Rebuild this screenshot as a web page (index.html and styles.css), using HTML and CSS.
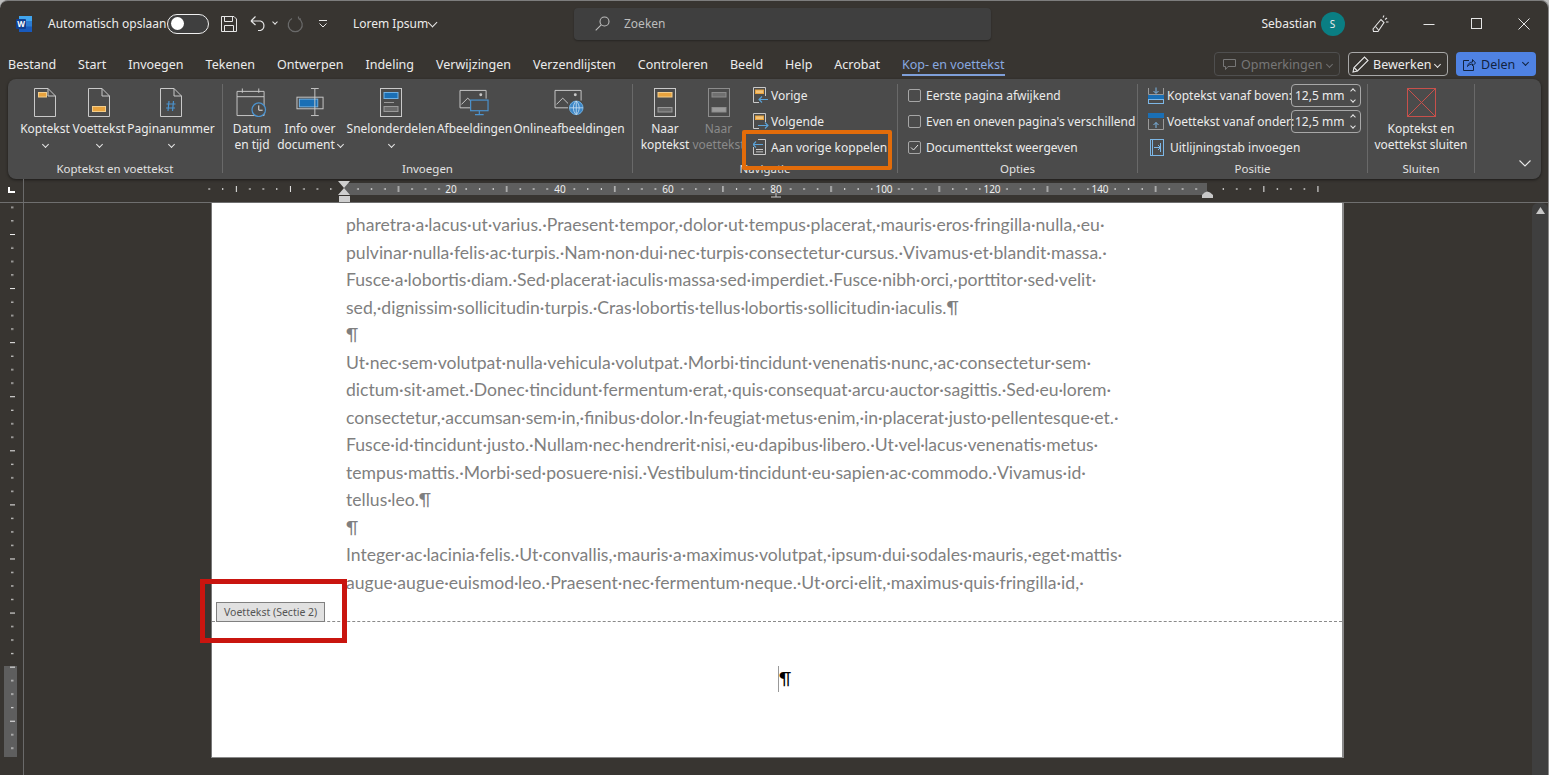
FILE: index.html
```html
<!DOCTYPE html>
<html lang="nl">
<head>
    <meta charset="UTF-8">
    <meta name="viewport" content="width=device-width, initial-scale=1.0">
    <title>Lorem Ipsum - Word</title>
    <link rel="stylesheet" href="styles.css">
</head>
<body>

<div class="window">

    <!-- Title bar -->
    <header class="titlebar">
        <div class="title-left">
            <svg class="logo" width="16" height="16" viewBox="0 0 16 16">
                <rect x="3" y="0" width="13" height="16" rx="1" fill="#2b7cd3"/>
                <rect x="3" y="0" width="13" height="5" fill="#41a5ee"/>
                <rect x="3" y="10.5" width="13" height="5.5" fill="#185abd"/>
                <rect x="0" y="3" width="10" height="10" rx="1" fill="#103f91"/>
                <text x="5" y="11" text-anchor="middle" font-size="8" font-weight="700" fill="#fff">W</text>
            </svg>
            <span class="autosave">Automatisch opslaan</span>
            <span class="toggle"><i class="toggle-knob"></i></span>
            <svg class="qa-save" width="16" height="16" viewBox="0 0 16 16" fill="none" stroke="#e6e6e6">
                <path d="M.5.5H13L15.5 3V15.5H.5Z"/>
                <path d="M3.5.5V5.5H11.5V.5M3.5 15.5V9.5H12.5V15.5"/>
            </svg>
            <svg class="qa-undo" width="17" height="17" viewBox="0 0 17 17" fill="none" stroke="#e6e6e6" stroke-width="1.2">
                <path d="M1 6H10.5A5 5 0 0 1 10.5 15.5H8M1 6L5.5 1.5M1 6L5.5 10"/>
            </svg>
            <i class="chev qa-chev"></i>
            <svg class="qa-redo" width="17" height="17" viewBox="0 0 17 17" fill="none" stroke="#6a6a6a" stroke-width="1.2">
                <path d="M11.5 2.5A7 7 0 1 1 5 2.5M11.5 2.5V.5M11.5 2.5L14 3"/>
            </svg>
            <svg class="qa-more" width="8" height="8" viewBox="0 0 8 8" fill="none" stroke="#e6e6e6">
                <path d="M0 .5H8M.5 3.5L4 7L7.5 3.5"/>
            </svg>
            <span class="doc-name">Lorem Ipsum</span>
            <i class="chev doc-chev"></i>
        </div>
        <div class="search">
            <svg width="15" height="15" viewBox="0 0 15 15" fill="none" stroke="#bdbdbd" stroke-width="1.1">
                <circle cx="9.5" cy="5.5" r="4.5"/>
                <path d="M6.2 8.8L.7 14.3"/>
            </svg>
            <span>Zoeken</span>
        </div>
        <div class="title-right">
            <span class="user-name">Sebastian</span>
            <span class="avatar">S</span>
            <svg class="brush" width="17" height="18" viewBox="0 0 17 18" fill="none" stroke="#e6e6e6" stroke-width="1.1">
                <path d="M1 14L9 4.5L12 7.5L6 16.5L1.5 16.5Z"/>
                <path d="M3.5 11.5L6.5 15M11 2.5L12 .5M13 4.5L15 3M14 7L16.5 7"/>
            </svg>
            <div class="win-controls">
                <span class="win-btn"><svg width="12" height="12" viewBox="0 0 12 12" stroke="#e6e6e6"><path d="M.5 6.5H11.5"/></svg></span>
                <span class="win-btn"><svg width="11" height="11" viewBox="0 0 11 11" fill="none" stroke="#e6e6e6"><rect x=".5" y=".5" width="10" height="10"/></svg></span>
                <span class="win-btn"><svg width="12" height="12" viewBox="0 0 12 12" stroke="#e6e6e6"><path d="M.5.5L11.5 11.5M11.5.5L.5 11.5"/></svg></span>
            </div>
        </div>
    </header>

    <!-- Tabs -->
    <nav class="tabs-row">
        <span class="tab">Bestand</span>
        <span class="tab">Start</span>
        <span class="tab">Invoegen</span>
        <span class="tab">Tekenen</span>
        <span class="tab">Ontwerpen</span>
        <span class="tab">Indeling</span>
        <span class="tab">Verwijzingen</span>
        <span class="tab">Verzendlijsten</span>
        <span class="tab">Controleren</span>
        <span class="tab">Beeld</span>
        <span class="tab">Help</span>
        <span class="tab">Acrobat</span>
        <span class="tab tab-active">Kop- en voettekst</span>
        <div class="tab-actions">
            <span class="action-btn action-comments">
                <svg width="13" height="13" viewBox="0 0 13 13" fill="none" stroke="#777"><path d="M.5 1.5H12.5V8.5H5L2.5 11.5V8.5H.5Z"/></svg>
                Opmerkingen
                <i class="chev chev-dim"></i>
            </span>
            <span class="action-btn action-edit">
                <svg width="17" height="17" viewBox="0 0 17 17" fill="none" stroke="#e6e6e6" stroke-width="1.1"><path d="M1 16L2 11.5L12.5 1L16 4.5L5.5 15Z"/><path d="M2 11.5L5.5 15"/></svg>
                Bewerken
                <i class="chev"></i>
            </span>
            <span class="action-btn action-share">
                <svg width="13" height="13" viewBox="0 0 13 13" fill="none" stroke="#12233f"><path d="M6 2.5H.5V12.5H10.5V8M4.5 8.5C5 5.5 7 4 9.5 4V1.5L12.5 5L9.5 8V6C7.5 6 5.5 7 4.5 8.5Z"/></svg>
                Delen
                <i class="chev chev-dark share-chev"></i>
            </span>
        </div>
    </nav>

    <!-- Ribbon -->
    <section class="ribbon">
        <div class="group group-headfoot">
            <div class="group-body">
                <div class="tall-btn w-46">
                    <svg class="tall-icon" width="22" height="29" viewBox="0 0 22 29" fill="none" stroke="#c9c9c9">
                        <path d="M.5.5H14L21.5 8V28.5H.5Z"/><path d="M14 .5V8H21.5"/>
                        <rect x="4.5" y="4.5" width="8" height="4.5" fill="#e8a33e" stroke="#f3cd8b"/>
                    </svg>
                    <span class="tall-label">Koptekst</span>
                    <span class="tall-label"><i class="chev"></i></span>
                </div>
                <div class="tall-btn w-48">
                    <svg class="tall-icon" width="22" height="29" viewBox="0 0 22 29" fill="none" stroke="#c9c9c9">
                        <path d="M.5.5H14L21.5 8V28.5H.5Z"/><path d="M14 .5V8H21.5"/>
                        <rect x="4.5" y="18.5" width="13" height="5" fill="#e8a33e" stroke="#f3cd8b"/>
                    </svg>
                    <span class="tall-label">Voettekst</span>
                    <span class="tall-label"><i class="chev"></i></span>
                </div>
                <div class="tall-btn w-82">
                    <svg class="tall-icon" width="22" height="29" viewBox="0 0 22 29" fill="none" stroke="#c9c9c9">
                        <path d="M.5.5H14L21.5 8V28.5H.5Z"/><path d="M14 .5V8H21.5"/>
                        <path d="M9 13L8 23M13.5 13L12.5 23M6.5 16H15.5M6 20H15" stroke="#4b93cf" stroke-width="1.2"/>
                    </svg>
                    <span class="tall-label">Paginanummer</span>
                    <span class="tall-label"><i class="chev"></i></span>
                </div>
            </div>
            <div class="group-label">Koptekst en voettekst</div>
        </div>
        <div class="sep"></div>

        <div class="group group-insert">
            <div class="group-body">
                <div class="tall-btn w-36">
                    <svg class="tall-icon" width="32" height="30" viewBox="0 0 32 30" fill="none" stroke="#c9c9c9">
                        <path d="M.5 3.5H28.5V28.5H.5ZM.5 9H28.5M6 .5V5M23 .5V5"/>
                        <circle cx="23" cy="22.5" r="7" fill="#4b4b4b" stroke="#4b93cf" stroke-width="1.3"/>
                        <path d="M23 18V23H27" stroke="#e6e6e6"/>
                    </svg>
                    <span class="tall-label">Datum</span>
                    <span class="tall-label">en tijd</span>
                </div>
                <div class="tall-btn w-66">
                    <svg class="tall-icon" width="29" height="30" viewBox="0 0 29 30" fill="none" stroke="#c9c9c9">
                        <rect x=".5" y="9.5" width="27" height="12"/>
                        <rect x="3" y="11.5" width="19" height="8" fill="#1a6fb5" stroke="#6fb1e4"/>
                        <path d="M15 .5H19V28.5H15M23 .5H19M23 28.5H19"/>
                    </svg>
                    <span class="tall-label">Info over</span>
                    <span class="tall-label">document <i class="chev"></i></span>
                </div>
                <div class="tall-btn w-82">
                    <svg class="tall-icon" width="22" height="29" viewBox="0 0 22 29" fill="none" stroke="#c9c9c9">
                        <rect x=".5" y=".5" width="21" height="28"/>
                        <rect x="4" y="4.5" width="14" height="6" fill="#1a6fb5" stroke="#6fb1e4"/>
                        <path d="M4 14.5H14" stroke="#9a9a9a"/>
                        <rect x="4" y="18.5" width="14" height="5" fill="#6a6a6a" stroke="#9a9a9a"/>
                    </svg>
                    <span class="tall-label">Snelonderdelen</span>
                    <span class="tall-label"><i class="chev"></i></span>
                </div>
                <div class="tall-btn w-71">
                    <svg class="tall-icon" width="31" height="30" viewBox="0 0 31 30" fill="none" stroke="#c9c9c9">
                        <path d="M11 20.5H.5V2.5H27.5V11"/>
                        <path d="M2 17L8.5 10.5L14 16"/>
                        <circle cx="22" cy="7" r="1.5" fill="#c9c9c9" stroke="none"/>
                        <rect x="11.5" y="12.5" width="18" height="11" fill="#4b4b4b" stroke="#4b93cf" stroke-width="1.2"/>
                        <path d="M20.5 23.5V27M16 27.5H25" stroke="#4b93cf" stroke-width="1.2"/>
                    </svg>
                    <span class="tall-label">Afbeeldingen</span>
                </div>
                <div class="tall-btn w-104">
                    <svg class="tall-icon" width="31" height="30" viewBox="0 0 31 30" fill="none" stroke="#c9c9c9">
                        <path d="M14 20.5H.5V2.5H27.5V13"/>
                        <path d="M2 17L8.5 10.5L14 16"/>
                        <circle cx="21.5" cy="7" r="1.5" fill="#c9c9c9" stroke="none"/>
                        <circle cx="22.5" cy="20.5" r="7" fill="#3d86c6" stroke="#6fb1e4"/>
                        <path d="M15.5 20.5H29.5M22.5 13.5V27.5M22.5 13.5C18.5 17 18.5 24 22.5 27.5C26.5 24 26.5 17 22.5 13.5Z" stroke="#cfe4f5" stroke-width=".8"/>
                    </svg>
                    <span class="tall-label">Onlineafbeeldingen</span>
                </div>
            </div>
            <div class="group-label">Invoegen</div>
        </div>
        <div class="sep"></div>

        <div class="group group-nav">
            <div class="group-body">
                <div class="tall-btn w-46">
                    <svg class="tall-icon" width="22" height="29" viewBox="0 0 22 29" fill="none" stroke="#c9c9c9">
                        <rect x=".5" y=".5" width="21" height="28"/>
                        <rect x="4" y="4.5" width="14" height="4.5" fill="#e8a33e" stroke="#f3cd8b"/>
                        <rect x="4" y="19.5" width="14" height="4.5" fill="#6a6a6a" stroke="#9a9a9a"/>
                    </svg>
                    <span class="tall-label">Naar</span>
                    <span class="tall-label">koptekst</span>
                </div>
                <div class="tall-btn w-47 is-disabled">
                    <svg class="tall-icon" width="22" height="29" viewBox="0 0 22 29" fill="none" stroke="#8c8c8c">
                        <rect x=".5" y=".5" width="21" height="28"/>
                        <rect x="4" y="4.5" width="14" height="4.5" fill="#707070"/>
                        <rect x="4" y="19.5" width="14" height="4.5" fill="#9a9a9a"/>
                    </svg>
                    <span class="tall-label">Naar</span>
                    <span class="tall-label">voettekst</span>
                </div>
                <div class="small-list nav-list">
                    <div class="small-row">
                        <svg width="16" height="16" viewBox="0 0 16 16" fill="none" stroke="#c9c9c9">
                            <path d="M6 15.5H.5V.5H12.5V9"/>
                            <rect x="2.5" y="3" width="8" height="3.5" fill="#f0c27a" stroke="#e8a33e"/>
                            <path d="M15 12.5H6M9 9.5L6 12.5L9 15.5" stroke="#5ba3d9" stroke-width="1.1"/>
                        </svg>
                        <span>Vorige</span>
                    </div>
                    <div class="small-row">
                        <svg width="16" height="16" viewBox="0 0 16 16" fill="none" stroke="#c9c9c9">
                            <path d="M6 15.5H.5V.5H12.5V9"/>
                            <rect x="2.5" y="3" width="8" height="3.5" fill="#f0c27a" stroke="#e8a33e"/>
                            <path d="M5 12.5H15M12 9.5L15 12.5L12 15.5" stroke="#5ba3d9" stroke-width="1.1"/>
                        </svg>
                        <span>Volgende</span>
                    </div>
                    <div class="small-row">
                        <svg width="16" height="16" viewBox="0 0 16 16" fill="none" stroke="#c9c9c9">
                            <path d="M5 .5H12.5V15.5H.5V8"/>
                            <path d="M3 10.5H10"/>
                            <rect x="3" y="12" width="7" height="1.5" fill="#9a9a9a" stroke="none"/>
                            <path d="M10 5.5H0M3 2.5L0 5.5L3 8.5" stroke="#5ba3d9" stroke-width="1.1"/>
                        </svg>
                        <span>Aan vorige koppelen</span>
                    </div>
                </div>
            </div>
            <div class="group-label">Navigatie</div>
        </div>
        <div class="sep"></div>

        <div class="group group-options">
            <div class="group-body">
                <div class="small-list">
                    <label class="small-row check-row"><i class="check"></i><span>Eerste pagina afwijkend</span></label>
                    <label class="small-row check-row"><i class="check"></i><span>Even en oneven pagina's verschillend</span></label>
                    <label class="small-row check-row">
                        <i class="check">
                            <svg width="11" height="11" viewBox="0 0 11 11" fill="none" stroke="#e6e6e6"><path d="M2 5.5L4.5 8L9 3"/></svg>
                        </i>
                        <span>Documenttekst weergeven</span>
                    </label>
                </div>
            </div>
            <div class="group-label">Opties</div>
        </div>
        <div class="sep"></div>

        <div class="group group-position">
            <div class="group-body">
                <div class="small-list">
                    <div class="small-row">
                        <svg width="16" height="17" viewBox="0 0 16 17" fill="none">
                            <path d="M8 .5V6M5.5 4L8 6.5L10.5 4" stroke="#7db7e6"/>
                            <path d="M.5 1V7.5H15.5V1" stroke="#9a9a9a"/>
                            <rect y="8" width="16" height="4" fill="#1a6fb5"/>
                            <rect x=".5" y="12.5" width="15" height="4" stroke="#7db7e6"/>
                        </svg>
                        <span class="spin-label">Koptekst vanaf boven:</span>
                        <span class="spinner"><span>12,5 mm</span><span class="spin-arrows"><i class="chev chev-up"></i><i class="chev"></i></span></span>
                    </div>
                    <div class="small-row">
                        <svg width="16" height="17" viewBox="0 0 16 17" fill="none">
                            <rect width="16" height="5" fill="#1a6fb5"/>
                            <path d="M.5 6V16.5H15.5V6" stroke="#9a9a9a"/>
                            <path d="M8 15V9.5M5.5 12L8 9.5L10.5 12" stroke="#7db7e6"/>
                        </svg>
                        <span class="spin-label">Voettekst vanaf onder:</span>
                        <span class="spinner"><span>12,5 mm</span><span class="spin-arrows"><i class="chev chev-up"></i><i class="chev"></i></span></span>
                    </div>
                    <div class="small-row tab-row">
                        <svg width="14" height="17" viewBox="0 0 14 17" fill="none" stroke="#7db7e6">
                            <rect x=".5" y=".5" width="13" height="16"/>
                            <path d="M2.5.5V16.5M4 8.5H10M8 6L10.5 8.5L8 11M10.5 4V13"/>
                        </svg>
                        <span>Uitlijningstab invoegen</span>
                    </div>
                </div>
            </div>
            <div class="group-label">Positie</div>
        </div>
        <div class="sep"></div>

        <div class="group group-close">
            <div class="group-body">
                <div class="tall-btn w-106">
                    <svg class="tall-icon" width="29" height="29" viewBox="0 0 29 29" fill="none" stroke="#c8504b">
                        <rect x=".5" y=".5" width="28" height="28"/>
                        <path d="M.5.5L28.5 28.5M28.5.5L.5 28.5"/>
                    </svg>
                    <span class="tall-label">Koptekst en</span>
                    <span class="tall-label">voettekst sluiten</span>
                </div>
            </div>
            <div class="group-label">Sluiten</div>
        </div>
        <div class="sep"></div>

        <div class="ribbon-end">
            <svg width="12" height="7" viewBox="0 0 12 7" fill="none" stroke="#e6e6e6" stroke-width="1.1"><path d="M.5.5L6 6L11.5.5"/></svg>
        </div>
    </section>

    <!-- Horizontal ruler -->
    <div class="ruler-row">
        <svg class="ruler-h" width="1549" height="23" viewBox="0 0 1549 23">
            <defs>
                <pattern id="margin-ticks" x="344" y="0" width="54.08" height="23" patternUnits="userSpaceOnUse">
                    <rect x="0" y="7" width="1" height="6" fill="#eee"/>
                    <rect x="13.5" y="9" width="1" height="2" fill="#eee"/>
                    <rect x="27" y="9" width="1" height="2" fill="#eee"/>
                    <rect x="40.5" y="9" width="1" height="2" fill="#eee"/>
                </pattern>
                <pattern id="text-ticks" x="344" y="0" width="108.16" height="23" patternUnits="userSpaceOnUse">
                    <rect x="13.5" y="9" width="1" height="2" fill="#eee"/>
                    <rect x="27" y="9" width="1" height="2" fill="#eee"/>
                    <rect x="40.5" y="9" width="1" height="2" fill="#eee"/>
                    <rect x="54" y="7" width="1" height="6" fill="#eee"/>
                    <rect x="67.6" y="9" width="1" height="2" fill="#eee"/>
                    <rect x="81" y="9" width="1" height="2" fill="#eee"/>
                    <rect x="94.6" y="9" width="1" height="2" fill="#eee"/>
                </pattern>
            </defs>
            <path d="M9 8V13H15" fill="none" stroke="#fff" stroke-width="2"/>
            <rect x="23" y="0" width="1" height="23" fill="#6a6a6a"/>
            <rect x="344" y="4" width="863" height="12" fill="#5e5e5e"/>
            <rect x="205" y="0" width="135" height="23" fill="url(#margin-ticks)"/>
            <rect x="350" y="0" width="857" height="23" fill="url(#text-ticks)"/>
            <rect x="1215" y="0" width="115" height="23" fill="url(#margin-ticks)"/>
            <g class="ruler-num" text-anchor="middle">
                <text x="451" y="14">20</text>
                <text x="560" y="14">40</text>
                <text x="668" y="14">60</text>
                <text x="776" y="14">80</text>
                <text x="884" y="14">100</text>
                <text x="992" y="14">120</text>
                <text x="1100" y="14">140</text>
            </g>
            <path d="M338 2H350L344 9L350 16H338L344 9Z" fill="#cfcfcf"/>
            <rect x="339" y="17" width="11" height="6" fill="#cfcfcf"/>
            <path d="M771 18H781M776 14V18" stroke="#c8c8c8" fill="none"/>
            <path d="M1202 19V16Q1207 9 1213 16V19Z" fill="#c8c8c8"/>
        </svg>
    </div>

    <!-- Document area -->
    <main class="doc-area">
        <svg class="ruler-v" width="24" height="572" viewBox="0 0 24 572">
            <defs>
                <pattern id="vert-ticks" x="0" y="31" width="24" height="54.08" patternUnits="userSpaceOnUse">
                    <rect x="10" y="0" width="5" height="1" fill="#eee"/>
                    <rect x="11" y="13.5" width="2.5" height="1" fill="#eee"/>
                    <rect x="11" y="27" width="2.5" height="1" fill="#eee"/>
                    <rect x="11" y="40.5" width="2.5" height="1" fill="#eee"/>
                </pattern>
            </defs>
            <rect x="4" y="463" width="13" height="91" fill="#5e5e5e"/>
            <rect x="0" y="0" width="23" height="554" fill="url(#vert-ticks)"/>
            <rect x="23" y="0" width="1" height="572" fill="#6a6a6a"/>
        </svg>

        <div class="canvas">
            <article class="page">
                <div class="body-text">
                    <div>pharetra·a·lacus·ut·varius.·Praesent·tempor,·dolor·ut·tempus·placerat,·mauris·eros·fringilla·nulla,·eu·</div>
                    <div>pulvinar·nulla·felis·ac·turpis.·Nam·non·dui·nec·turpis·consectetur·cursus.·Vivamus·et·blandit·massa.·</div>
                    <div>Fusce·a·lobortis·diam.·Sed·placerat·iaculis·massa·sed·imperdiet.·Fusce·nibh·orci,·porttitor·sed·velit·</div>
                    <div>sed,·dignissim·sollicitudin·turpis.·Cras·lobortis·tellus·lobortis·sollicitudin·iaculis.¶</div>
                    <div>¶</div>
                    <div>Ut·nec·sem·volutpat·nulla·vehicula·volutpat.·Morbi·tincidunt·venenatis·nunc,·ac·consectetur·sem·</div>
                    <div>dictum·sit·amet.·Donec·tincidunt·fermentum·erat,·quis·consequat·arcu·auctor·sagittis.·Sed·eu·lorem·</div>
                    <div>consectetur,·accumsan·sem·in,·finibus·dolor.·In·feugiat·metus·enim,·in·placerat·justo·pellentesque·et.·</div>
                    <div>Fusce·id·tincidunt·justo.·Nullam·nec·hendrerit·nisi,·eu·dapibus·libero.·Ut·vel·lacus·venenatis·metus·</div>
                    <div>tempus·mattis.·Morbi·sed·posuere·nisi.·Vestibulum·tincidunt·eu·sapien·ac·commodo.·Vivamus·id·</div>
                    <div>tellus·leo.¶</div>
                    <div>¶</div>
                    <div>Integer·ac·lacinia·felis.·Ut·convallis,·mauris·a·maximus·volutpat,·ipsum·dui·sodales·mauris,·eget·mattis·</div>
                    <div>augue·augue·euismod·leo.·Praesent·nec·fermentum·neque.·Ut·orci·elit,·maximus·quis·fringilla·id,·</div>
                </div>
                <div class="page-footer">
                    <span class="footer-tag">Voettekst (Sectie 2)</span>
                    <div class="footer-para"><i class="caret"></i>¶</div>
                </div>
            </article>
        </div>

        <div class="scrollbar">
            <svg width="9" height="7" viewBox="0 0 9 7"><path d="M4.5 0L9 7H0Z" fill="#c8c8c8"/></svg>
        </div>
    </main>

    <!-- Marker boxes drawn over the screenshot -->
    <div class="mark mark-orange"></div>
    <div class="mark mark-red"></div>
</div>

</body>
</html>
```

FILE: styles.css
```css
/* Basic Reset */
* {
    margin: 0;
    padding: 0;
    box-sizing: border-box;
}

body {
    font-family: 'Noto Sans', 'Open Sans', sans-serif;
    font-size: 12px;
    background-color: #bdbdbd;
    color: #ececec;
    overflow: hidden;
}

i {
    font-style: normal;
}

svg {
    display: block;
    flex: none;
}

/* Window */
.window {
    position: relative;
    width: 1549px;
    height: 775px;
    display: flex;
    flex-direction: column;
    background-color: #383531;
    border-top: 1px solid #7d7d7d;
    border-right: 1px solid #8a8a8a;
    border-radius: 8px 8px 0 0;
    overflow: hidden;
}

/* Small chevron used all over the ribbon */
.chev {
    display: inline-block;
    width: 5px;
    height: 5px;
    border-right: 1px solid #e6e6e6;
    border-bottom: 1px solid #e6e6e6;
    transform: rotate(45deg);
    vertical-align: 2px;
}

.chev-up {
    transform: rotate(225deg);
}

.chev-dim {
    border-color: #6f6f6f;
}

.chev-dark {
    border-color: #12233f;
}

/* Title bar */
.titlebar {
    display: flex;
    align-items: center;
    height: 45px;
}

.title-left {
    display: flex;
    align-items: center;
    width: 574px;
    padding-left: 16px;
    font-size: 12px;
}

.autosave {
    width: 119px;
    margin-left: 16px;
    white-space: nowrap;
}

.toggle {
    display: flex;
    align-items: center;
    width: 42px;
    height: 20px;
    padding-left: 3px;
    border: 1px solid #f0f0f0;
    border-radius: 10px;
    background-color: #3f3f3f;
}

.toggle-knob {
    width: 13px;
    height: 13px;
    border-radius: 50%;
    background-color: #fff;
}

.qa-save {
    margin-left: 12px;
}

.qa-undo {
    margin-left: 13px;
}

.qa-chev {
    margin-left: 6px;
    margin-top: -3px;
    width: 4px;
    height: 4px;
}

.qa-redo {
    margin-left: 10px;
    margin-top: 2px;
}

.qa-more {
    margin-left: 15px;
}

.doc-name {
    margin-left: 26px;
    width: 74px;
    white-space: nowrap;
}

.doc-chev {
    margin-left: 2px;
    margin-top: -3px;
    width: 7px;
    height: 7px;
}

.search {
    display: flex;
    align-items: center;
    gap: 14px;
    width: 417px;
    height: 32px;
    padding-left: 21px;
    background-color: #3f3f3f;
    border-radius: 4px;
    color: #bdbdbd;
    box-shadow: 0 1px 2px rgba(0, 0, 0, 0.3);
}

.title-right {
    flex: 1;
    display: flex;
    align-items: center;
    justify-content: flex-end;
}

.user-name {
    width: 50px;
    white-space: nowrap;
    margin-right: 9px;
}

.avatar {
    display: flex;
    align-items: center;
    justify-content: center;
    width: 24px;
    height: 24px;
    border-radius: 50%;
    background-color: #0a7e83;
    font-size: 10px;
}

.brush {
    margin-left: 27px;
    margin-right: 17px;
}

.win-controls {
    display: flex;
}

.win-btn {
    display: flex;
    align-items: center;
    justify-content: center;
    width: 47.5px;
    height: 45px;
}

/* Tabs */
.tabs-row {
    display: flex;
    align-items: center;
    gap: 22px;
    height: 33px;
    padding: 3px 0 0 8px;
    font-size: 12.5px;
}

.tab {
    position: relative;
    white-space: nowrap;
}

.tab-active {
    color: #88a9e0;
}

.tab-active::after {
    content: "";
    position: absolute;
    left: 0;
    right: 0;
    bottom: -3px;
    height: 2px;
    background-color: #7f9fd8;
}

.tab-actions {
    display: flex;
    gap: 8px;
    margin-left: auto;
    padding-right: 12px;
}

.action-btn {
    display: flex;
    align-items: center;
    height: 24px;
    border-radius: 4px;
    white-space: nowrap;
}

.action-comments {
    width: 126px;
    gap: 5px;
    padding-left: 8px;
    border: 1px solid #4f4f4f;
    color: #777;
}

.action-edit {
    width: 100px;
    gap: 4px;
    padding-left: 3px;
    border: 1px solid #a8a8a8;
}

.action-share {
    position: relative;
    width: 80px;
    gap: 5px;
    padding-left: 7px;
    background-color: #4f82e3;
    color: #12233f;
}

.share-chev {
    position: absolute;
    right: 8px;
    top: 8px;
}

/* Ribbon */
.ribbon {
    display: flex;
    flex: none;
    height: 100px;
    margin: 0 7px 0 8px;
    background-color: #4b4b4b;
    border-radius: 8px;
    box-shadow: 0 1px 3px rgba(0, 0, 0, 0.5);
}

.sep {
    flex: none;
    width: 1px;
    margin: 5px 0 6px;
    background-color: #696969;
}

.group {
    flex: none;
    display: flex;
    flex-direction: column;
    padding-top: 3px;
}

.group-body {
    display: flex;
    gap: 7px;
    height: 79px;
}

.group-label {
    height: 16px;
    line-height: 16px;
    text-align: center;
    font-size: 11.5px;
    color: #e2e2e2;
}

.group-headfoot {
    width: 214px;
}

.group-headfoot .group-body {
    padding-left: 14px;
}

.group-insert {
    width: 409px;
}

.group-insert .group-body {
    padding-left: 11px;
}

.group-nav {
    width: 264px;
}

.group-nav .group-body {
    padding-left: 9px;
}

.group-options {
    width: 239px;
}

.group-options .group-body {
    padding-left: 10px;
}

.group-position {
    width: 229px;
}

.group-position .group-body {
    padding-left: 10px;
}

.group-close {
    width: 106px;
}

.ribbon-end {
    flex: 1;
    display: flex;
    align-items: flex-end;
    justify-content: flex-end;
    padding: 0 10px 12px 0;
}

/* Large ribbon button: icon with up to two lines below it */
.tall-btn {
    flex: none;
    display: flex;
    flex-direction: column;
    align-items: center;
    padding-top: 6px;
}

.tall-icon {
    height: 29px;
    margin-bottom: 4px;
}

.tall-label {
    height: 16px;
    line-height: 16px;
    white-space: nowrap;
    text-align: center;
}

.is-disabled {
    color: #8a8a8a;
}

.w-36 { width: 36px; }
.w-46 { width: 46px; }
.w-47 { width: 47px; }
.w-48 { width: 48px; }
.w-66 { width: 66px; }
.w-71 { width: 71px; }
.w-82 { width: 82px; }
.w-104 { width: 104px; }
.w-106 { width: 106px; }

/* Small ribbon rows */
.small-list {
    display: flex;
    flex-direction: column;
}

.nav-list {
    margin-left: 4px;
}

.small-row {
    display: flex;
    align-items: center;
    gap: 2px;
    height: 26px;
    white-space: nowrap;
}

.check-row {
    gap: 5px;
}

.check {
    display: flex;
    align-items: center;
    justify-content: center;
    width: 13px;
    height: 13px;
    border: 1px solid #a6a6a6;
    border-radius: 2px;
}

.spin-label {
    width: 122px;
    margin-left: 1px;
}

.spinner {
    display: flex;
    align-items: center;
    justify-content: space-between;
    width: 70px;
    height: 23px;
    padding: 0 5px 0 3px;
    border: 1px solid #a8a8a8;
    border-radius: 4px;
}

.spin-arrows {
    display: flex;
    flex-direction: column;
    align-items: center;
    gap: 5px;
}

.spin-arrows .chev {
    width: 4px;
    height: 4px;
}

.tab-row {
    gap: 6px;
    padding-left: 2px;
}

/* Horizontal ruler */
.ruler-row {
    flex: none;
    height: 24px;
    border-bottom: 1px solid #6f6f6f;
}

.ruler-num {
    font-size: 10px;
    fill: #eee;
}

/* Document area */
.doc-area {
    flex: 1;
    display: flex;
    min-height: 0;
}

.canvas {
    flex: 1;
    padding-left: 187px;
}

.page {
    width: 1133px;
    height: 555px;
    padding-left: 134px;
    background-color: #fff;
    border-left: 1px solid #777;
    border-right: 2px solid #8a8a8a;
    border-bottom: 1px solid #8a8a8a;
}

.body-text {
    padding-top: 8px;
    font-family: 'Lato', 'Liberation Sans', sans-serif;
    font-size: 17.6px;
    line-height: 27.54px;
    color: #7f7f7f;
    white-space: nowrap;
}

.body-text div {
    height: 27.54px;
}

.page-footer {
    position: relative;
    margin: 25px 0 0 -134px;
    height: 100px;
    border-top: 1px dashed #8a8a8a;
}

.footer-tag {
    position: absolute;
    left: 4px;
    bottom: 100%;
    height: 20px;
    padding: 0 7px;
    line-height: 18px;
    font-size: 10.5px;
    white-space: nowrap;
    color: #555;
    background-color: #e1e1e1;
    border: 1px solid #808080;
}

.footer-para {
    position: absolute;
    left: 566px;
    top: 44px;
    height: 26px;
    padding-left: 1px;
    line-height: 26px;
    font-family: 'Lato', 'Liberation Sans', sans-serif;
    font-size: 17.6px;
    color: #000;
}

.caret {
    position: absolute;
    left: 0;
    top: 0;
    width: 1px;
    height: 26px;
    background-color: #999;
}

.scrollbar {
    flex: none;
    width: 16px;
    margin-right: 0;
    padding: 4px 0 0 4px;
    background-color: #3f3f3f;
    border-radius: 6px 6px 0 0;
}

/* Marker boxes */
.mark {
    position: absolute;
    pointer-events: none;
}

.mark-orange {
    left: 742px;
    top: 129px;
    width: 150px;
    height: 40px;
    border: 4px solid #e36c0a;
    border-radius: 2px;
}

.mark-red {
    left: 200px;
    top: 578px;
    width: 147px;
    height: 64px;
    border: 5px solid #c9150f;
}
```
